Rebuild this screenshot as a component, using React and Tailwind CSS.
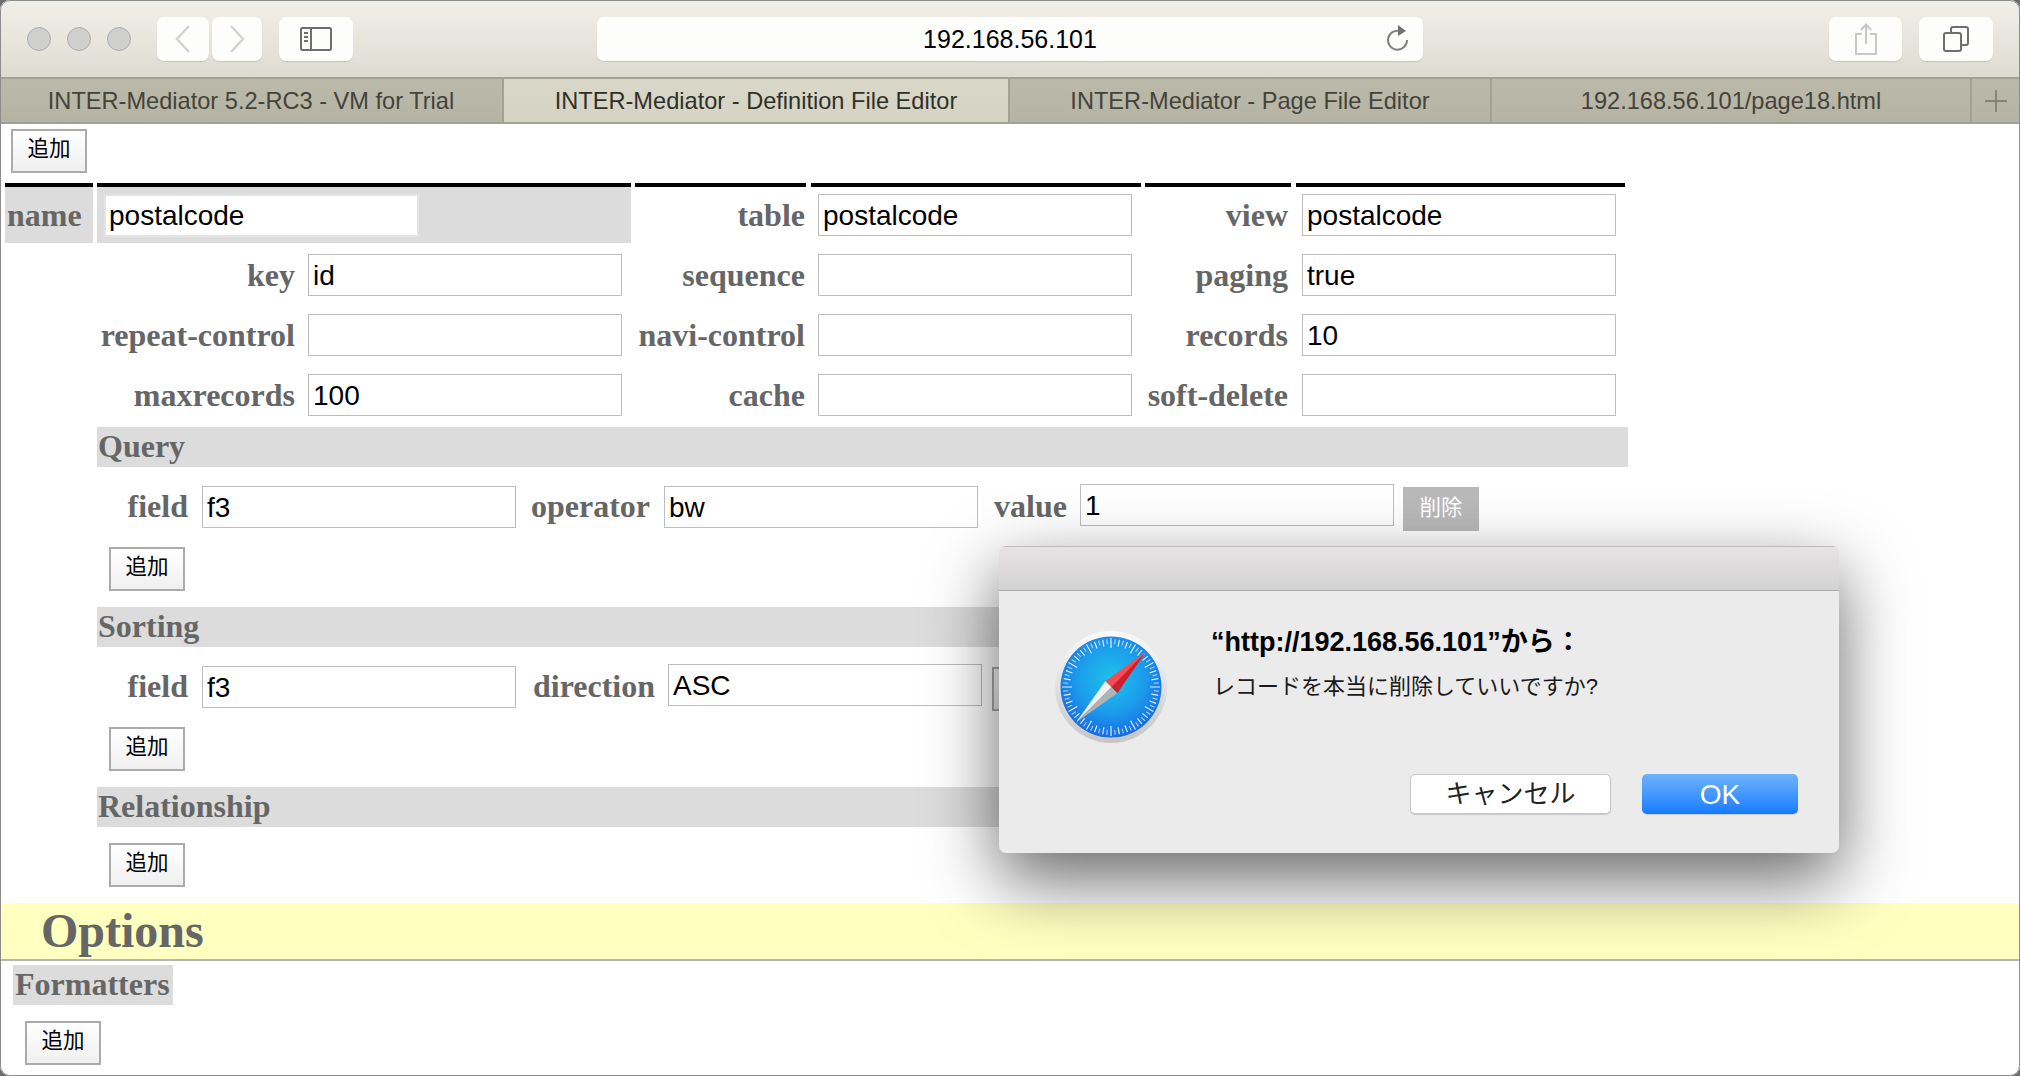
import React from 'react';

const sans = "font-['Liberation_Sans','Noto_Sans_CJK_JP',sans-serif]";
const labelCls = "font-['Liberation_Serif',serif] font-bold text-[32px] leading-[40px] text-[#666666] whitespace-nowrap";

const ToolButton = ({ className, children }) => (
  <div className={`h-[44px] rounded-[7px] bg-[#fdfdfc] shadow-[0_1px_1px_rgba(0,0,0,0.12)] flex items-center justify-center ${className}`}>
    {children}
  </div>
);

const Light = () => <div className="w-[24px] h-[24px] rounded-full bg-[#cfcfcd] border border-[#aeaeac]"></div>;

const Toolbar = () => (
  <div className="h-[77px] flex items-center bg-gradient-to-b from-[#f1efe9] to-[#dedcd1]">
    <div className="flex gap-[16px] ml-[27px]">
      <Light />
      <Light />
      <Light />
    </div>
    <ToolButton className="w-[52px] ml-[26px]">
      <svg width="20" height="30" viewBox="0 0 20 30" fill="none" stroke="#d2d2d0" strokeWidth="2.4"><path d="M16 2 L4 15 L16 28" /></svg>
    </ToolButton>
    <ToolButton className="w-[50px] ml-[3px]">
      <svg width="20" height="30" viewBox="0 0 20 30" fill="none" stroke="#d2d2d0" strokeWidth="2.4"><path d="M4 2 L16 15 L4 28" /></svg>
    </ToolButton>
    <ToolButton className="w-[74px] ml-[17px]">
      <svg width="32" height="24" viewBox="0 0 32 24" fill="none" stroke="#6f6f6f" strokeWidth="2">
        <rect x="1" y="1" width="30" height="22" rx="1.5" />
        <path d="M11 1 V23" />
        <path d="M4 6 H8 M4 10 H8 M4 14 H8" />
      </svg>
    </ToolButton>
    <ToolButton className={`w-[826px] ml-[244px] relative text-[25px] text-black ${sans}`}>
      <span className="pt-[3px]">192.168.56.101</span>
      <svg className="absolute right-[12px] top-[8px]" width="26" height="28" viewBox="0 0 26 28" fill="none">
        <path d="M15 6 A9.5 9.5 0 1 0 22 15" stroke="#808080" strokeWidth="2" />
        <path d="M13 0 L21 6 L13 11 Z" fill="#707070" />
      </svg>
    </ToolButton>
    <ToolButton className="w-[73px] ml-[406px]">
      <svg width="24" height="32" viewBox="0 0 24 32" fill="none" stroke="#c8c8c8" strokeWidth="2">
        <path d="M8 11 H2 V31 H22 V11 H16" />
        <path d="M12 21 V2 M7 7 L12 1.5 L17 7" />
      </svg>
    </ToolButton>
    <ToolButton className="w-[74px] ml-[17px]">
      <svg width="26" height="26" viewBox="0 0 26 26" fill="none" stroke="#6f6f6f" strokeWidth="2">
        <rect x="1" y="7" width="17" height="18" rx="2" />
        <path d="M8 7 V3 Q8 1 10 1 H23 Q25 1 25 3 V17 Q25 19 23 19 H18" />
      </svg>
    </ToolButton>
  </div>
);

const Tab = ({ className, active, children }) => (
  <div
    className={`h-full pt-[2px] flex items-center justify-center border-r-[2px] border-[#a3a193] text-[23.6px] whitespace-nowrap ${className} ${
      active ? 'bg-gradient-to-b from-[#d9d7c8] to-[#d5d3c2] text-[#30302a]' : 'bg-gradient-to-b from-[#bbb9aa] to-[#b5b3a3] text-[#44433a]'
    }`}
  >
    {children}
  </div>
);

const TabBar = () => (
  <div className={`h-[47px] flex border-y-[2px] border-[#a3a193] ${sans}`}>
    <Tab className="w-[504px]">INTER-Mediator 5.2-RC3 - VM for Trial</Tab>
    <Tab className="w-[506px]" active>INTER-Mediator - Definition File Editor</Tab>
    <Tab className="w-[482px]">INTER-Mediator - Page File Editor</Tab>
    <Tab className="w-[480px]">192.168.56.101/page18.html</Tab>
    <div className="flex-1 flex items-center justify-center bg-gradient-to-b from-[#bbb9aa] to-[#b5b3a3]">
      <svg width="24" height="24" viewBox="0 0 24 24" stroke="#77766a" strokeWidth="1.5"><path d="M12 1 V23 M1 12 H23" /></svg>
    </div>
  </div>
);

const AddButton = ({ className = '', children = '追加' }) => (
  <button className={`block w-[76px] h-[44px] pb-[3px] border-[2px] border-[#ababab] bg-gradient-to-b from-white to-[#f0f0f0] text-[21.5px] text-black ${sans} ${className}`}>
    {children}
  </button>
);

const DeleteButton = ({ className = '' }) => (
  <button className={`block w-[76px] h-[44px] pb-[2px] bg-[#b9b9b9] text-[21.5px] text-white ${sans} ${className}`}>削除</button>
);

const Field = ({ value = '', className = '' }) => (
  <input
    readOnly
    value={value}
    className={`block h-[42px] w-[314px] border border-[#bdbdbd] bg-white px-[4px] pt-[2px] text-[28px] text-black ${sans} ${className}`}
  />
);

const Label = ({ className, children }) => <div className={`${labelCls} text-right ${className}`}>{children}</div>;

const PropRow = ({ a, av, b, bv, c, cv }) => (
  <div className="h-[60px] flex items-center">
    <Label className="w-[295px]">{a}</Label>
    <Field value={av} className="ml-[13px]" />
    <Label className="w-[183px]">{b}</Label>
    <Field value={bv} className="ml-[13px]" />
    <Label className="w-[156px]">{c}</Label>
    <Field value={cv} className="ml-[14px]" />
  </div>
);

const TopBar = ({ className, children }) => <div className={`border-t-[4px] border-black ${className}`}>{children}</div>;

const PropHeader = () => (
  <div className="flex h-[60px] mt-[10px]">
    <TopBar className="ml-[5px] w-[88px] bg-[#dcdcdc] flex items-center pl-[2px]">
      <span className={labelCls}>name</span>
    </TopBar>
    <TopBar className="ml-[4px] w-[534px] bg-[#dcdcdc] flex items-center pl-[7px]">
      <Field value="postalcode" className="!w-[315px] !h-[43px] !px-[3px] !border-[2px] !border-[#e4e4e4]" />
    </TopBar>
    <TopBar className="ml-[4px] w-[171px] flex items-center justify-end pr-[1px]">
      <span className={labelCls}>table</span>
    </TopBar>
    <TopBar className="ml-[5px] w-[330px] flex items-center pl-[7px]">
      <Field value="postalcode" />
    </TopBar>
    <TopBar className="ml-[4px] w-[146px] flex items-center justify-end pr-[3px]">
      <span className={labelCls}>view</span>
    </TopBar>
    <TopBar className="ml-[5px] w-[329px] flex items-center pl-[6px]">
      <Field value="postalcode" />
    </TopBar>
  </div>
);

const SectionBar = ({ className = '', children }) => (
  <div className={`ml-[97px] w-[1531px] h-[40px] bg-[#dcdcdc] pl-[1px] ${labelCls} !leading-[38px] ${className}`}>{children}</div>
);

const SafariIcon = () => {
  const ticks = Array.from({ length: 72 }, (_, i) => i * 5);
  return (
    <svg width="112" height="112" viewBox="-56 -56 112 112" className="shrink-0">
      <defs>
        <linearGradient id="ring" x1="0" y1="0" x2="0" y2="1">
          <stop offset="0" stopColor="#fafafa" />
          <stop offset="1" stopColor="#c6c6c6" />
        </linearGradient>
        <radialGradient id="face" cx="0.5" cy="0.42" r="0.6">
          <stop offset="0" stopColor="#1cc3ea" />
          <stop offset="0.55" stopColor="#1c9cec" />
          <stop offset="1" stopColor="#1767e2" />
        </radialGradient>
      </defs>
      <circle r="56" fill="url(#ring)" />
      <circle r="50.5" fill="url(#face)" />
      {ticks.map((deg) => (
        <line
          key={deg}
          x1="0"
          y1={deg % 30 === 0 ? -49 : -48}
          x2="0"
          y2={deg % 30 === 0 ? -39 : deg % 10 === 0 ? -41 : -43}
          stroke="#ffffff"
          strokeOpacity={deg % 10 === 0 ? 0.85 : 0.6}
          strokeWidth="1.2"
          transform={`rotate(${deg})`}
        />
      ))}
      <polygon points="34.7,-35 -5.7,-5.7 0.3,0.3" fill="#f84a50" />
      <polygon points="34.7,-35 0.3,0.3 6.3,6.3" fill="#cf1f2a" />
      <polygon points="-35,35.6 -5.7,-5.7 0.3,0.3" fill="#f1f1f1" />
      <polygon points="-35,35.6 0.3,0.3 6.3,6.3" fill="#b2b2b2" />
    </svg>
  );
};

const Dialog = () => (
  <div className={`absolute left-[999px] top-[546px] w-[840px] h-[307px] rounded-[7px] overflow-hidden bg-[#ebebeb] shadow-[0_26px_70px_rgba(0,0,0,0.6)] flex flex-col ${sans}`}>
    <div className="h-[45px] shrink-0 border-y border-t-[#bdbbbc] border-b-[#a9a9a9] bg-gradient-to-b from-[#e7e3e5] to-[#d3d2d2]"></div>
    <div className="flex pl-[56px] pt-[40px]">
      <SafariIcon />
      <div className="ml-[44px]">
        <div className="text-[27px] leading-[30px] mt-[-4px] font-bold text-black whitespace-nowrap">“http://192.168.56.101”から：</div>
        <div className="text-[22px] leading-[30px] mt-[15px] ml-[2px] text-[#1a1a1a] whitespace-nowrap">レコードを本当に削除していいですか?</div>
      </div>
    </div>
    <div className="flex justify-end gap-[31px] pr-[41px] mt-[31px]">
      <button className="w-[201px] h-[40px] rounded-[5px] bg-white border border-[#c8c8c8] text-[26px] text-[#222222] shadow-[0_1px_1px_rgba(0,0,0,0.15)]">キャンセル</button>
      <button className="w-[156px] h-[40px] rounded-[5px] bg-gradient-to-b from-[#6db3fa] to-[#0f7bfe] text-[28px] text-white shadow-[0_1px_1px_rgba(0,0,0,0.15)]">OK</button>
    </div>
  </div>
);

const App = () => (
  <div className="relative w-[2020px] h-[1076px] overflow-hidden bg-[#6b6b6b]">
    <div className="relative h-full rounded-[10px] overflow-hidden bg-white">
      <Toolbar />
      <TabBar />

      <AddButton className="ml-[11px] mt-[5px]" />
      <PropHeader />
      <div className="mt-[2px]">
        <PropRow a="key" av="id" b="sequence" c="paging" cv="true" />
        <PropRow a="repeat-control" b="navi-control" c="records" cv="10" />
        <PropRow a="maxrecords" av="100" b="cache" c="soft-delete" />
      </div>

      <SectionBar className="mt-[2px]">Query</SectionBar>
      <div className="flex items-start mt-[17px] h-[47px]">
        <Label className="w-[188px] mt-[2px]">field</Label>
        <Field value="f3" className="ml-[14px] mt-[2px]" />
        <Label className="w-[134px] mt-[2px]">operator</Label>
        <Field value="bw" className="ml-[14px] mt-[2px]" />
        <Label className="w-[89px] mt-[2px]">value</Label>
        <Field value="1" className="ml-[13px]" />
        <DeleteButton className="ml-[9px] mt-[3px]" />
      </div>
      <AddButton className="ml-[109px] mt-[16px]" />

      <SectionBar className="mt-[16px]">Sorting</SectionBar>
      <div className="flex items-start mt-[17px] h-[47px]">
        <Label className="w-[188px] mt-[2px]">field</Label>
        <Field value="f3" className="ml-[14px] mt-[2px]" />
        <Label className="w-[139px] mt-[2px]">direction</Label>
        <Field value="ASC" className="ml-[13px]" />
        <AddButton className="ml-[10px] mt-[3px]">削除</AddButton>
      </div>
      <AddButton className="ml-[109px] mt-[16px]" />

      <SectionBar className="mt-[16px]">Relationship</SectionBar>
      <AddButton className="ml-[109px] mt-[16px]" />

      <div className="mt-[16px] h-[58px] bg-[#ffffc0] border-b-[2px] border-[#b5b5b5] pl-[41px] font-['Liberation_Serif',serif] font-bold text-[48px] leading-[56px] text-[#666666]">
        Options
      </div>
      <div className={`mt-[4px] ml-[13px] w-[160px] h-[40px] bg-[#dcdcdc] pl-[2px] ${labelCls} !leading-[38px]`}>Formatters</div>
      <AddButton className="ml-[25px] mt-[16px]" />

      <Dialog />
    </div>
    <div className="absolute inset-0 rounded-[10px] border border-[#8c8c8c] pointer-events-none"></div>
  </div>
);

export default App;
